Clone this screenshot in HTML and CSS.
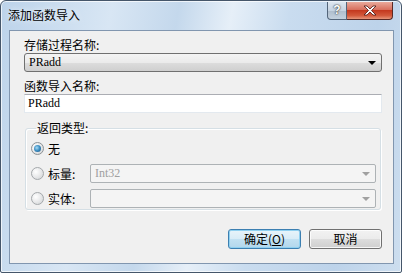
FILE: index.html
```html
<!DOCTYPE html>
<html lang="zh-CN">
<head>
    <meta charset="UTF-8">
    <title>添加函数导入</title>
    <link rel="stylesheet" href="styles.css">
</head>
<body>
    <div class="window">
        <div class="titlebar">
            <span class="title">添加函数导入</span>
            <div class="caption-buttons">
                <div class="cap-help">?</div>
                <div class="cap-close">
                    <svg width="14" height="11" viewBox="0 0 14 11">
                        <path d="M1 1h3l3 3 3-3h3l-4.5 4.5 4.5 4.5h-3l-3-3-3 3h-3l4.5-4.5z" fill="#fff" stroke="#4a1410" stroke-width="0.8"/>
                    </svg>
                </div>
            </div>
        </div>

        <div class="client">
            <div class="field-label">存储过程名称:</div>
            <div class="combo">
                <span class="combo-text">PRadd</span>
                <span class="arrow"></span>
            </div>

            <div class="field-label second">函数导入名称:</div>
            <div class="textbox">PRadd</div>

            <fieldset class="group">
                <legend>返回类型:</legend>
                <div class="group-row">
                    <span class="radio checked"></span>
                    <span class="radio-label">无</span>
                </div>
                <div class="group-row">
                    <span class="radio"></span>
                    <span class="radio-label">标量:</span>
                    <div class="combo disabled">
                        <span class="combo-text">Int32</span>
                        <span class="arrow"></span>
                    </div>
                </div>
                <div class="group-row">
                    <span class="radio"></span>
                    <span class="radio-label">实体:</span>
                    <div class="combo disabled">
                        <span class="combo-text"></span>
                        <span class="arrow"></span>
                    </div>
                </div>
            </fieldset>

            <div class="buttons">
                <button class="btn default">确定(<u>O</u>)</button>
                <button class="btn">取消</button>
            </div>
        </div>
    </div>
</body>
</html>
```

FILE: styles.css
```css
* {
    box-sizing: border-box;
}
html, body {
    margin: 0;
    padding: 0;
    background: #ffffff;
}
body {
    font-family: "Noto Sans CJK SC", "Liberation Sans", sans-serif;
    font-size: 12px;
    color: #000;
}
.window {
    width: 402px;
    height: 273px;
    border: 1px solid #45566a;
    border-radius: 6px 6px 2px 2px;
    background: linear-gradient(100deg, #bcd3ea 0%, #d8e6f4 25%, #c4d8ec 40%, #e6eff8 52%, #c9dcef 65%, #bdd3ea 85%, #cddeef 100%);
    box-shadow: inset 0 0 0 1px rgba(255, 255, 255, 0.7);
    display: flex;
    flex-direction: column;
}
.titlebar {
    height: 29px;
    flex: none;
    display: flex;
    justify-content: space-between;
    align-items: flex-start;
}
.title {
    margin: 6px 0 0 7px;
    font-size: 12px;
    line-height: 16px;
    color: #000;
    text-shadow: 0 0 6px rgba(255, 255, 255, 0.9);
}
.caption-buttons {
    display: flex;
    margin-right: 8px;
    margin-top: 1px;
}
.cap-help {
    width: 20px;
    height: 18px;
    border: 1px solid #53657a;
    border-top: none;
    border-radius: 0 0 0 4px;
    background: linear-gradient(#dde6ef 0%, #c7d4e2 50%, #aebdcc 51%, #c4d2df 100%);
    color: #fff;
    font-family: "Liberation Sans", sans-serif;
    font-weight: bold;
    font-size: 12px;
    line-height: 17px;
    text-align: center;
    text-shadow: 0 0 2px #333, 0 0 1px #333;
}
.cap-close {
    width: 46px;
    height: 18px;
    border: 1px solid #5a2a25;
    border-top: none;
    border-left: none;
    border-radius: 0 0 4px 0;
    background: linear-gradient(#e9a99b 0%, #d8705e 45%, #c4391f 50%, #d35a3c 80%, #e6957a 100%);
    display: flex;
    align-items: center;
    justify-content: center;
}
.client {
    margin: 0 7px 8px 8px;
    height: 234px;
    border: 1px solid #8196af;
    background: #f0f0f0;
    padding: 7px 11px 0 14px;
}
.field-label {
    line-height: 14px;
    height: 14px;
    margin-bottom: 1px;
}
.field-label.second {
    margin-top: 7px;
}
.combo {
    height: 19px;
    border: 1px solid #707070;
    border-radius: 3px;
    background: linear-gradient(#f4f4f4 0%, #ebebeb 50%, #dddddd 51%, #cfcfcf 100%);
    display: flex;
    align-items: center;
    justify-content: space-between;
    padding: 0 5px 0 4px;
}
.combo-text {
    font-family: "Liberation Serif", serif;
    font-size: 12px;
}
.arrow {
    width: 0;
    height: 0;
    border-left: 4px solid transparent;
    border-right: 4px solid transparent;
    border-top: 4px solid #000;
    margin-top: 1px;
}
.combo.disabled {
    flex: 1;
    background: #f4f4f4;
    border-color: #adb2b5;
    border-radius: 2px;
}
.combo.disabled .combo-text {
    color: #a0a0a0;
}
.combo.disabled .arrow {
    border-top-color: #a0a0a0;
}
.textbox {
    height: 19px;
    border: 1px solid #e3e9ef;
    border-top-color: #abadb3;
    background: #fff;
    font-family: "Liberation Serif", serif;
    line-height: 17px;
    padding-left: 3px;
}
.group {
    margin: 8px 1px 0 1px;
    padding: 4px 4px 1px 5px;
    border: 1px solid #d5dfe5;
    border-radius: 3px;
    box-shadow: inset 1px 1px 0 #fff, 1px 1px 0 #fff;
    display: flex;
    flex-direction: column;
    gap: 6px;
}
.group legend {
    padding: 0 1px;
    margin-left: 5px;
    line-height: 14px;
}
.group-row {
    flex: none;
    height: 19px;
    display: flex;
    align-items: center;
}
.radio {
    width: 13px;
    height: 13px;
    border: 1px solid #a4a8ab;
    border-radius: 50%;
    background: radial-gradient(circle at 35% 35%, #ffffff 0%, #e8e9ea 50%, #cdd0d2 100%);
    position: relative;
    flex: none;
}
.radio.checked {
    border-color: #8d9295;
}
.radio.checked::after {
    content: "";
    position: absolute;
    left: 2px;
    top: 2px;
    width: 7px;
    height: 7px;
    border-radius: 50%;
    background: radial-gradient(circle at 40% 40%, #a7dcf6 0%, #3a8cc0 50%, #1d4d78 100%);
}
.radio-label {
    width: 42px;
    margin-left: 4px;
    line-height: 14px;
}
.buttons {
    display: flex;
    justify-content: flex-end;
    gap: 8px;
    margin-top: 19px;
}
.btn {
    width: 73px;
    height: 20px;
    padding: 0;
    border: 1px solid #707070;
    border-radius: 3px;
    background: linear-gradient(#f2f2f2 0%, #ebebeb 50%, #dddddd 51%, #cfcfcf 100%);
    font-family: "Noto Sans CJK SC", sans-serif;
    font-size: 12px;
    line-height: 16px;
    color: #000;
    box-shadow: inset 0 0 0 1px rgba(255, 255, 255, 0.8);
}
.btn.default {
    border-color: #3c7fb1;
    background: linear-gradient(#e8f4fa 0%, #d8ecf7 50%, #c2e1f2 51%, #b3d7ec 100%);
    box-shadow: inset 0 0 0 1px #8fd0f0;
}
```
